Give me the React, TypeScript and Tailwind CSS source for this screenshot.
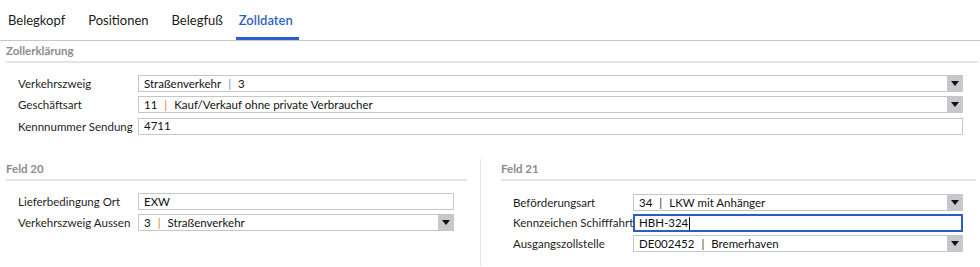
import React from "react";

const FONT = { fontFamily: 'Lato, "Open Sans", sans-serif' };

const tabs = ["Belegkopf", "Positionen", "Belegfuß", "Zolldaten"];

function Pipe({ tone }: { tone?: "blue" | "orange" }) {
    const color = tone === "blue" ? "text-[#5b8fd0]" : tone === "orange" ? "text-[#d0843a]" : "text-[#333]";
    return <span className={`mx-[7px] ${color}`}>|</span>;
}

function DropArrow() {
    return (
        <div className="w-[16px] h-full bg-[#c8c8cc] flex items-center justify-center shrink-0">
            <svg width="8" height="5" viewBox="0 0 8 5">
                <path d="M0 0 H8 L4 5 Z" fill="#111" />
            </svg>
        </div>
    );
}

function SelectBox({ children }: { children: React.ReactNode }) {
    return (
        <div className="flex-1 h-[17px] flex items-stretch border border-[#c6c6c6] bg-white border-r-0">
            <div className="flex-1 flex items-center pl-[5px] text-[11.5px] text-[#111] leading-none whitespace-nowrap overflow-hidden">
                {children}
            </div>
            <DropArrow />
        </div>
    );
}

function TextBox({ value, focused }: { value: string; focused?: boolean }) {
    return (
        <div
            className={
                focused
                    ? "flex-1 h-[18px] flex items-center border-2 border-[#2b5cc4] bg-white pl-[4px] text-[11.5px] text-[#111] leading-none"
                    : "flex-1 h-[17px] flex items-center border border-[#c6c6c6] bg-white pl-[5px] text-[11.5px] text-[#111] leading-none"
            }
        >
            {value}
            {focused && <span className="w-px h-[13px] bg-[#111] ml-px" />}
        </div>
    );
}

function Row({ label, children }: { label: string; children: React.ReactNode }) {
    return (
        <div className="flex items-center">
            <div className="w-[120px] shrink-0 text-[11.5px] text-[#1e1e1e] whitespace-nowrap">{label}</div>
            {children}
        </div>
    );
}

function SectionHeader({ title }: { title: string }) {
    return (
        <div className="h-[22px] flex items-center border-b-2 border-[#e4e4e4] text-[11.5px] font-bold text-[#8c8c8c]">
            {title}
        </div>
    );
}

export default function App() {
    return (
        <div className="w-[980px] h-[267px] bg-white overflow-hidden" style={FONT}>
            {/* tab bar */}
            <div className="h-[41px] flex gap-[15px] border-b border-[#c8c8c8] pl-[4px]">
                {tabs.map((t) => {
                    const active = t === "Zolldaten";
                    return (
                        <div
                            key={t}
                            className={
                                active
                                    ? "h-full -ml-[6px] pl-[3px] pr-[6px] flex items-center border-b-[3px] border-[#2b5fce] pt-[4px] text-[13px] font-semibold text-[#2f5fc4]"
                                    : "h-full px-[4px] flex items-center border-b-[3px] border-transparent pt-[4px] text-[13px] text-[#1a1a1a]"
                            }
                        >
                            {t}
                        </div>
                    );
                })}
            </div>

            {/* Zollerklärung */}
            <div className="px-[6px] pr-[2px]">
                <SectionHeader title="Zollerklärung" />
                <div className="pt-[12px] pl-[12px] pr-[15px] flex flex-col gap-[4px]">
                    <Row label="Verkehrszweig">
                        <SelectBox>
                            Straßenverkehr<Pipe tone="blue" />3
                        </SelectBox>
                    </Row>
                    <Row label="Geschäftsart">
                        <SelectBox>
                            11<Pipe tone="orange" />Kauf/Verkauf ohne private Verbraucher
                        </SelectBox>
                    </Row>
                    <Row label="Kennnummer Sendung">
                        <TextBox value="4711" />
                    </Row>
                </div>
            </div>

            {/* Feld 20 / Feld 21 */}
            <div className="flex mt-[24px] h-[107px]">
                <div className="w-[481px] border-r border-[#e6e6e6] pl-[6px] pr-[13px]">
                    <SectionHeader title="Feld 20" />
                    <div className="pt-[12px] pl-[12px] pr-[13px] flex flex-col gap-[4px]">
                        <Row label="Lieferbedingung Ort">
                            <TextBox value="EXW" />
                        </Row>
                        <Row label="Verkehrszweig Aussen">
                            <SelectBox>
                                3<Pipe tone="orange" />Straßenverkehr
                            </SelectBox>
                        </Row>
                    </div>
                </div>
                <div className="flex-1 pl-[20px] pr-[4px]">
                    <SectionHeader title="Feld 21" />
                    <div className="pt-[13px] pl-[12px] pr-[13px] flex flex-col gap-[3px]">
                        <Row label="Beförderungsart">
                            <SelectBox>
                                34<Pipe />LKW mit Anhänger
                            </SelectBox>
                        </Row>
                        <Row label="Kennzeichen Schifffahrt">
                            <TextBox value="HBH-324" focused />
                        </Row>
                        <Row label="Ausgangszollstelle">
                            <SelectBox>
                                DE002452<Pipe />Bremerhaven
                            </SelectBox>
                        </Row>
                    </div>
                </div>
            </div>
        </div>
    );
}
